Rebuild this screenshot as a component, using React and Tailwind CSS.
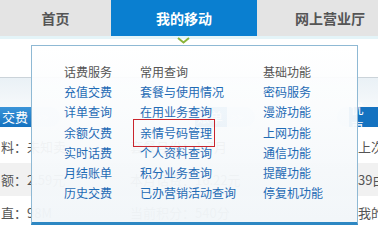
import React from 'react';

const font = { fontFamily: '"Noto Sans CJK SC", "Noto Sans", sans-serif' };

const columns = [
  {
    title: '话费服务',
    width: 'w-[76px]',
    links: ['充值交费', '详单查询', '余额欠费', '实时话费', '月结账单', '历史交费'],
  },
  {
    title: '常用查询',
    width: 'w-[123px]',
    links: ['套餐与使用情况', '在用业务查询', '亲情号码管理', '个人资料查询', '积分业务查询', '已办营销活动查询'],
  },
  {
    title: '基础功能',
    width: 'flex-1',
    links: ['密码服务', '漫游功能', '上网功能', '通信功能', '提醒功能', '停复机功能'],
  },
];

const Pill = ({ title, className }) => (
  <div className={`flex h-[20px] items-center ${className}`}>
    <span className="flex h-full items-center bg-gradient-to-b from-[#3a94d8] to-[#1472c0] pr-[4px] pl-[2px] text-[13px] text-white">
      {title}
    </span>
    <span className="flex h-full w-[28px] items-center rounded-r-full bg-[#dce9f4] pl-[4px] text-[11px] text-white">
      &gt;&gt;
    </span>
  </div>
);

const Backdrop = () => (
  <div className="text-[12px] text-[#555]">
    <div className="h-[37px]" />
    <div className="h-[40px] bg-white" />
    <div className="h-[1px] bg-[#cbd3d9]" />
    <div className="flex h-[52px] items-end bg-gradient-to-b from-[#eaf1f6] to-white pb-[3px]">
      <Pill title="交费" className="w-[200px]" />
      <Pill title="账单" className="w-[146px]" />
      <div className="flex h-[20px] items-center">
        <span className="h-full w-[12px] rounded-l-full bg-[#dce9f4]" />
        <span className="flex h-full items-center bg-[#1472c0] px-[2px] text-[13px] text-white">优惠</span>
      </div>
    </div>
    {[
      ['料：未知卖', '套餐月份：1-7月', '上次交费'],
      ['额：2.59元', '本月话费：16.22元', '39由本地'],
      ['直：98M', '当前积分：540分', '我的话费'],
    ].map((row, i) => (
      <div key={i} className={`flex h-[33px] items-center ${i === 1 ? 'bg-[#f1f1f1]' : 'bg-white'}`}>
        <span className="w-[130px] shrink-0 pl-[1px] text-[13px]">{row[0]}</span>
        <span className="w-[228px] shrink-0 text-[13px]">{row[1]}</span>
        <span className="shrink-0 text-[13px]">{row[2]}</span>
      </div>
    ))}
  </div>
);

export default function App() {
  return (
    <div className="relative h-[230px] w-[378px] overflow-hidden bg-white" style={font}>
      <Backdrop />

      {/* 顶部导航 */}
      <div className="absolute top-0 left-0 flex h-[37px] w-full bg-[#e4e4e4] text-[14px] font-bold">
        <div className="flex w-[111px] shrink-0 items-center justify-center text-[#555]">首页</div>
        <div className="flex h-[36px] w-[146px] shrink-0 items-center justify-center bg-[#0a7fd0] text-white">我的移动</div>
        <div className="flex w-[146px] shrink-0 items-center justify-center text-[#555]">网上营业厅</div>
      </div>
      <div className="absolute top-[36px] left-0 h-[3px] w-full bg-[#e4f4f8]" />
      <svg className="absolute top-[37px] left-[177px]" width="13" height="7" viewBox="0 0 13 7">
        <polyline points="1,1 6.5,5.5 12,1" fill="none" stroke="#8ab43a" strokeWidth="2" />
      </svg>

      {/* 下拉菜单 */}
      <div className="absolute top-[45px] left-[31px] h-[180px] w-[327px] border border-b-[3px] border-[#8fb9d4] border-b-[#2d87c3] bg-white/[0.93]">
        <div className="h-full bg-gradient-to-b from-transparent to-[#e9f0f5]/60 pt-[16px] pl-[32px]">
          <div className="flex">
            {columns.map((col) => (
              <div key={col.title} className={col.width}>
                <div className="h-[20px] text-[12px] leading-[20px] text-[#555]">{col.title}</div>
                {col.links.map((link) => (
                  <div key={link} className="h-[20.3px] text-[12px] leading-[20px] text-[#1f6bb5]">
                    {link === '亲情号码管理' ? (
                      <span className="relative">
                        {link}
                        <span className="absolute -top-[5px] -right-[3px] -bottom-[6px] -left-[7px] border border-[#c9252d]" />
                      </span>
                    ) : (
                      link
                    )}
                  </div>
                ))}
              </div>
            ))}
          </div>
        </div>
      </div>
    </div>
  );
}
